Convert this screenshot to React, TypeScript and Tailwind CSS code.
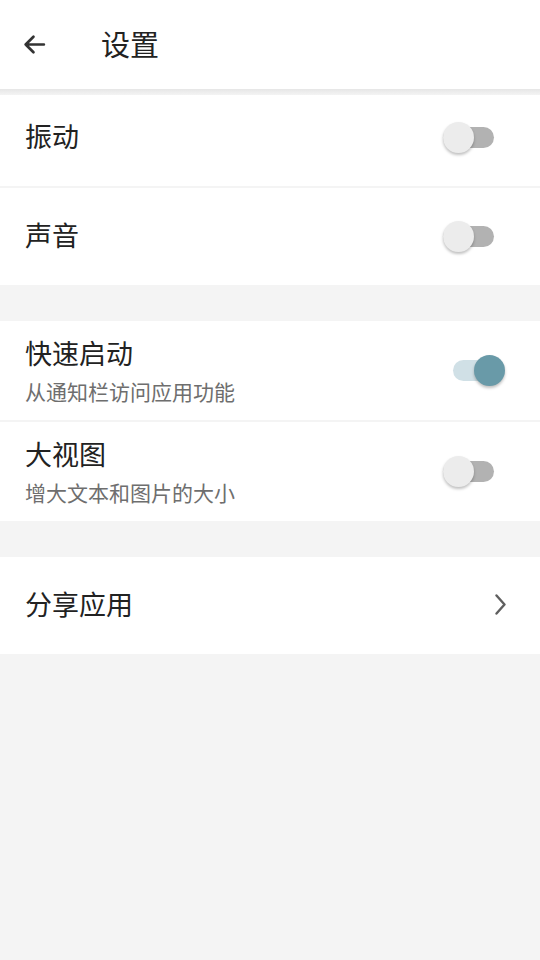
import React from "react";

const font = { fontFamily: '"Noto Sans CJK SC", "Noto Sans", sans-serif' };

function Toggle({ on }: { on: boolean }) {
  if (on) {
    return (
      <div className="relative w-[62px] h-[31px]">
        <div className="absolute left-[10px] top-[5px] w-[51px] h-[21px] rounded-full bg-[#d0e0e6]" />
        <div className="absolute left-[31px] top-0 w-[31px] h-[31px] rounded-full bg-[#699aa8] shadow-[0_2px_3px_rgba(0,0,0,0.25)]" />
      </div>
    );
  }
  return (
    <div className="relative w-[62px] h-[31px]">
      <div className="absolute left-0 top-[5px] w-[51px] h-[21px] rounded-full bg-[#b2b2b2]" />
      <div className="absolute left-0 top-0 w-[31px] h-[31px] rounded-full bg-[#ececec] shadow-[0_2px_3px_rgba(0,0,0,0.25)]" />
    </div>
  );
}

function Row({ title, sub, on, h }: { title: string; sub?: string; on: boolean; h: string }) {
  return (
    <div className={`flex items-center justify-between bg-white pl-[25px] pr-[35px] ${h}`}>
      <div className={`flex flex-col ${sub ? "" : "pb-[4px]"}`}>
        <span className="text-[27px] leading-[36px] text-[#222222]">{title}</span>
        {sub && <span className="text-[21px] leading-[30px] text-[#6e6e6e] mt-[5px]">{sub}</span>}
      </div>
      <Toggle on={on} />
    </div>
  );
}

export default function App() {
  return (
    <div className="w-[540px] h-[960px] bg-[#f4f4f4] flex flex-col" style={font}>
      <div className="relative z-10 h-[89px] bg-white flex items-center">
        <svg className="ml-[22px] mb-[1px]" width="25" height="25" viewBox="0 0 24 24" fill="none" stroke="#333333" strokeWidth="2.6" strokeLinecap="round" strokeLinejoin="round">
          <path d="M21 12H3.5M11 4.5L3.5 12l7.5 7.5" />
        </svg>
        <span className="ml-[54px] mb-[2px] text-[29px] text-[#222222] leading-none">设置</span>
        <div className="absolute left-0 right-0 top-[89px] h-[6px] bg-gradient-to-b from-[#e6e6e6] to-[#f4f4f4]" />
      </div>
      <div className="flex flex-col gap-[2px]">
        <Row title="振动" on={false} h="h-[97px]" />
        <Row title="声音" on={false} h="h-[97px]" />
      </div>
      <div className="mt-[36px] flex flex-col gap-[2px]">
        <Row title="快速启动" sub="从通知栏访问应用功能" on={true} h="h-[99px]" />
        <Row title="大视图" sub="增大文本和图片的大小" on={false} h="h-[99px]" />
      </div>
      <div className="mt-[36px] h-[97px] bg-white flex items-center justify-between pl-[25px] pr-[34px]">
        <span className="text-[27px] leading-[36px] pb-[4px] text-[#222222]">分享应用</span>
        <svg className="mb-[3px]" width="11" height="21" viewBox="0 0 11 21" fill="none" stroke="#5f5f5f" strokeWidth="2.4" strokeLinecap="round" strokeLinejoin="round">
          <path d="M1.5 1.5l8 9-8 9" />
        </svg>
      </div>
    </div>
  );
}
